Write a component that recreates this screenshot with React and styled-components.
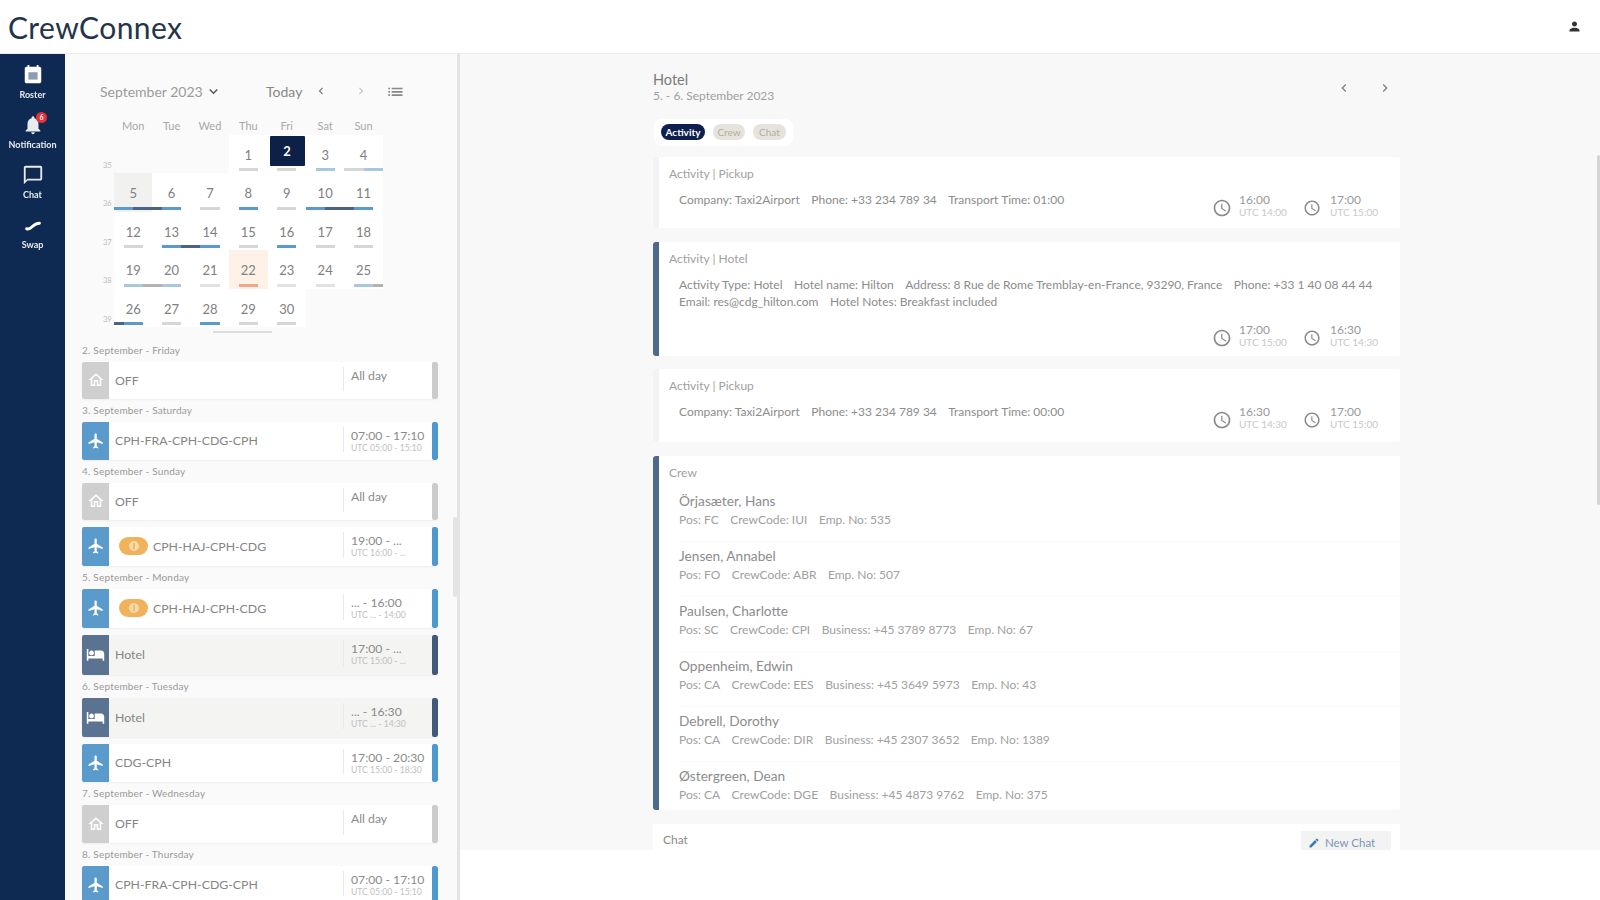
import React from 'react';
import styled, { createGlobalStyle } from 'styled-components';

const Global = createGlobalStyle`
  html, body { margin: 0; padding: 0; width: 1600px; height: 900px; overflow: hidden; background: #fff; }
  * { box-sizing: border-box; }
  body { font-family: Lato, "Open Sans", "Liberation Sans", sans-serif; color: #666; }
`;

const Shell = styled.div`
  width: 1600px; height: 900px; display: flex; flex-direction: column; position: relative; overflow: hidden;
  filter: blur(0.75px);
`;
const TopBar = styled.header`
  height: 54px; flex: none; display: flex; align-items: center; justify-content: space-between;
  padding: 0 18px 0 8px; background: #fff; border-bottom: 1px solid #ececec;
`;
const Logo = styled.div`font-size: 30px; color: #24344b; letter-spacing: 0.4px;`;
const Body = styled.div`flex: 1; display: flex; min-height: 0;`;
const Nav = styled.nav`width: 65px; flex: none; background: #0f2a52; display: flex; flex-direction: column;`;
const NavItem = styled.div`
  height: 50px; padding-top: 10px; display: flex; flex-direction: column; align-items: center; position: relative;
  color: #e8ebf0; font-size: 9px; font-weight: 700; line-height: 11px;
  svg { display: block; margin-bottom: 3px; }
`;
const NavBadge = styled.span`
  position: absolute; top: 8px; left: 36px; width: 11px; height: 11px; border-radius: 50%;
  background: #e5333a; color: #fff; font-size: 7px; line-height: 11px; text-align: center;
`;

const Panel = styled.aside`
  width: 395px; flex: none; background: #fafafa; border-right: 3px solid #e4e4e4; position: relative; overflow: hidden;
`;
const Toolbar = styled.div`
  height: 22px; margin: 26px 0 15px 35px; display: flex; align-items: center; color: #888; font-size: 14px;
`;
const Month = styled.span`display: flex; align-items: center; gap: 2px; width: 166px; color: #9a9a9a;`;
const TodayLabel = styled.span`width: 48px; color: #888;`;
const ToolIcon = styled.span`display: flex; width: ${p => p.$w}px;`;
const WeekHead = styled.div`
  margin-left: 31px; display: grid; grid-template-columns: 18px repeat(7, 38.4px); height: 18px; padding-top: 2px;
  font-size: 11px; color: #a8a8a8; text-align: center;
`;
const Grid = styled.div`
  margin-left: 31px; display: grid; grid-template-columns: 18px repeat(7, 38.4px); grid-auto-rows: 38.4px;
`;
const WeekNo = styled.div`font-size: 7.5px; color: #bbb; padding: 26px 0 0 7px; text-align: left;`;
const Cell = styled.div`
  display: flex; flex-direction: column; align-items: center; position: relative;
  background: ${p => p.$bg || (p.$empty ? 'transparent' : '#fff')};
  color: #808080; font-size: 13px; line-height: 16px; padding-top: 12px;
`;
const SelBox = styled.div`
  position: absolute; top: 1px; left: 2px; width: 35px; height: 30px; background: #0d2148; color: #fff;
  border-radius: 1px; text-align: center; line-height: 31px; font-weight: 700; font-size: 13px;
`;
const Bar = styled.div`position: absolute; left: 0; right: 0; bottom: 2px; height: 3px; display: flex;`;
const Seg = styled.span`flex: 1; background: ${p => p.$c || 'transparent'};`;
const Handle = styled.div`width: 59px; height: 2px; background: #ddd; margin: 4px 0 6px 148px;`;

const List = styled.div`margin-left: 17px; width: 356px;`;
const DayHead = styled.div`height: 23px; line-height: 23px; font-size: 10px; color: #999; letter-spacing: 0.2px;`;
const Rows = styled.div`display: flex; flex-direction: column; gap: 7px;`;
const Row = styled.div`
  height: ${p => p.$h}px; display: flex; background: ${p => p.$hotel ? '#f4f4f3' : '#fff'};
  border-radius: 2px; box-shadow: 0 1px 2px rgba(0,0,0,.05); overflow: hidden;
`;
const RowIcon = styled.div`
  width: 27px; flex: none; background: ${p => p.$c}; display: flex; align-items: center; justify-content: center; color: #fff;
`;
const RowText = styled.div`
  flex: 1; min-width: 0; padding-left: 6px; display: flex; align-items: center; gap: 5px; font-size: 12.3px; color: #858585;
`;
const Pill = styled.span`
  width: 29px; height: 18px; border-radius: 9px; background: #f1b25c; color: #fff; display: flex; align-items: center; justify-content: center; margin-left: 4px;
`;
const RowTime = styled.div`
  width: 89px; flex: none; position: relative; padding: 6px 0 0 8px; font-size: 12.2px; line-height: 15px; color: #8a8a8a; white-space: nowrap;
  &::before { content: ''; position: absolute; left: 0; top: 5px; bottom: 8px; width: 1px; background: #e9e9e9; }
`;
const RowUtc = styled.div`font-size: 8.6px; line-height: 9px; color: #c0c0c0; margin-top: 1px;`;
const RowEnd = styled.div`width: 6px; flex: none; background: ${p => p.$c}; border-radius: 2px;`;
const PanelThumb = styled.div`position: absolute; right: 0; top: 463px; width: 4px; height: 80px; background: #e4e4e4; border-radius: 2px;`;

const Main = styled.main`flex: 1; min-width: 0; display: flex; flex-direction: column; position: relative; background: #fff;`;
const Detail = styled.div`
  height: 796px; flex: none; background: #f8f8f8; overflow: hidden; padding: 18px 0 0 193px;
`;
const DetailInner = styled.div`width: 747px;`;
const DetailTop = styled.div`display: flex; justify-content: space-between; align-items: center; padding-right: 7px;`;
const Title = styled.div`font-size: 14.5px; line-height: 16px; color: #7a7a7a;`;
const Sub = styled.div`font-size: 12px; line-height: 16px; color: #a0a0a0;`;
const Arrows = styled.div`display: flex; gap: 25px; color: #808080;`;
const Tabs = styled.div`
  display: inline-flex; gap: 8px; margin: 15px 0 11px 1px; padding: 5px 7px 6px; background: #fff; border-radius: 8px;
`;
const Tab = styled.span`
  height: 16px; width: ${p => p.$w}px; text-align: center; border-radius: 8px; font-size: 10px; line-height: 16px;
  background: ${p => p.$active ? '#0d1f4f' : '#e6e3dc'}; color: ${p => p.$active ? '#fff' : '#b0ada4'}; font-weight: ${p => p.$active ? 700 : 400};
`;
const Card = styled.section`
  background: #fff; border-left: 6px solid ${p => p.$bar}; border-radius: 3px; margin-bottom: ${p => p.$mb}px;
  min-height: ${p => p.$h}px; padding: 10px 22px 0 10px;
`;
const CardTitle = styled.div`font-size: 12px; line-height: 14px; color: #a0a0a0;`;
const CardBody = styled.div`display: flex; flex-wrap: wrap; padding: 10px 0 0 10px;`;
const Info = styled.div`font-size: 12px; line-height: 17px; color: #8c8c8c; white-space: nowrap;`;
const InfoPart = styled.span`margin-right: 11.5px; &:last-child { margin-right: 0; }`;
const Times = styled.div`display: flex; gap: 15px; margin: ${p => p.$mt}px 0 0 auto;`;
const TimeBlock = styled.div`display: flex; gap: ${p => p.$gap}px; align-items: flex-end; width: ${p => p.$w}px; color: #8a8a8a;`;
const TimeText = styled.div`font-size: 12px; line-height: 12px; color: #9a9a9a;`;
const TimeUtc = styled.div`font-size: 10px; line-height: 12px; color: #c8c8c8; white-space: nowrap;`;
const CrewList = styled.div`padding: 7px 0 0 10px; margin-right: -22px;`;
const CrewEntry = styled.div`
  padding: 6px 0 14px; height: 55px; border-bottom: 1px solid #fbfbfb;
  &:last-child { border-bottom: 0; height: 48px; }
`;
const CrewName = styled.div`font-size: 13.7px; line-height: 16px; color: #8c8c8c;`;
const CrewInfo = styled.div`font-size: 12px; line-height: 16px; color: #a0a0a0; margin-top: 3px;`;
const ChatCard = styled.section`
  background: #fff; display: flex; justify-content: space-between; padding: 6px 9px 0 10px; height: 40px; margin-top: 1px;
`;
const ChatTitle = styled.div`font-size: 12px; line-height: 18px; color: #8a8a8a; padding-top: 1px;`;
const NewChat = styled.div`
  display: flex; align-items: center; gap: 5px; width: 90px; height: 26px; background: #f3f3f3; color: #7d96b8;
  font-size: 11.5px; padding: 0 7px 3px; margin-top: 1px;
`;
const MainThumb = styled.div`position: absolute; right: 0; top: 101px; width: 3px; height: 350px; background: #d4d4d4; border-radius: 2px;`;

const Ic = ({ d, size = 16, fill = 'currentColor' }) => (
  <svg width={size} height={size} viewBox="0 0 24 24" fill={fill}><path d={d} /></svg>
);
const P = {
  flight: 'M21 16v-2l-8-5V3.5c0-.83-.67-1.5-1.5-1.5S10 2.67 10 3.5V9l-8 5v2l8-2.5V19l-2 1.5V22l3.5-1 3.5 1v-1.5L13 19v-5.5l8 2.5z',
  hotel: 'M7 13c1.66 0 3-1.34 3-3S8.66 7 7 7s-3 1.34-3 3 1.34 3 3 3zm12-6h-8v7H3V5H1v15h2v-3h18v3h2v-9c0-2.21-1.79-4-4-4z',
  home: 'M12 5.69l5 4.5V18h-2v-6H9v6H7v-7.81l5-4.5M12 3L2 12h3v8h6v-6h2v6h6v-8h3L12 3z',
  clock: 'M11.99 2C6.47 2 2 6.48 2 12s4.47 10 9.99 10C17.52 22 22 17.52 22 12S17.52 2 11.99 2zM12 20c-4.42 0-8-3.58-8-8s3.58-8 8-8 8 3.58 8 8-3.58 8-8 8zm.5-13H11v6l5.25 3.15.75-1.23-4.5-2.67z',
  person: 'M12 12c2.21 0 4-1.79 4-4s-1.79-4-4-4-4 1.79-4 4 1.79 4 4 4zm0 2c-2.67 0-8 1.34-8 4v2h16v-2c0-2.66-5.33-4-8-4z',
  list: 'M4 14h2v-2H4v2zm0 4h2v-2H4v2zm0-8h2V8H4v2zm4 4h13v-2H8v2zm0 4h13v-2H8v2zM8 8v2h13V8H8z',
  left: 'M15.41 7.41L14 6l-6 6 6 6 1.41-1.41L10.83 12z',
  right: 'M10 6L8.59 7.41 13.17 12l-4.58 4.58L10 18l6-6z',
  down: 'M7.41 8.59L12 13.17l4.59-4.58L18 10l-6 6-6-6z',
  pen: 'M3 17.25V21h3.75L17.81 9.94l-3.75-3.75L3 17.25zM20.71 7.04c.39-.39.39-1.02 0-1.41l-2.34-2.34c-.39-.39-1.02-.39-1.41 0l-1.83 1.83 3.75 3.75 1.83-1.83z',
  bell: 'M12 22c1.1 0 2-.9 2-2h-4c0 1.1.89 2 2 2zm6-6v-5c0-3.07-1.64-5.64-4.5-6.32V4c0-.83-.67-1.5-1.5-1.5s-1.5.67-1.5 1.5v.68C7.63 5.36 6 7.92 6 11v5l-2 2v1h16v-1l-2-2z',
  chat: 'M20 2H4c-1.1 0-2 .9-2 2v18l4-4h14c1.1 0 2-.9 2-2V4c0-1.1-.9-2-2-2zm0 14H6l-2 2V4h16v12z',
  cal: 'M19 3h-1V1h-2v2H8V1H6v2H5c-1.1 0-2 .9-2 2v14c0 1.1.9 2 2 2h14c1.1 0 2-.9 2-2V5c0-1.1-.9-2-2-2z',
};

const g = '#d6d6d6', b = '#5b9bcc', d = '#4c6482', lb = '#a9c8e0', lg = '#b3b3b3', vl = '#e2e2e2', o = '#f4a68a';
const G = [null, g, g, null], B = [null, b, b, null], VL = [null, vl, vl, null];
const weeks = [
  { no: 35, days: [null, null, null, { n: 1, bar: G }, { n: 2, sel: true, bar: G }, { n: 3, bar: [null, lb, lb, null] }, { n: 4, bar: [g, g, lb, lb] }] },
  { no: 36, days: [{ n: 5, bg: '#f1f1f0', bar: [b, b, d, d] }, { n: 6, bar: [d, b, b, null] }, { n: 7, bar: G }, { n: 8, bar: B }, { n: 9, bar: G }, { n: 10, bar: [b, b, d, d] }, { n: 11, bar: [d, b, b, null] }] },
  { no: 37, days: [{ n: 12, bar: G }, { n: 13, bar: [null, b, b, d] }, { n: 14, bar: [d, b, b, null] }, { n: 15, bar: G }, { n: 16, bar: B }, { n: 17, bar: G }, { n: 18, bar: G }] },
  { no: 38, days: [{ n: 19, bar: [null, lb, lb, lg] }, { n: 20, bar: [lg, lb, lb, null] }, { n: 21, bar: VL }, { n: 22, bg: '#fdf1e8', bar: [null, o, o, null] }, { n: 23, bar: VL }, { n: 24, bar: VL }, { n: 25, bar: [null, lb, lb, lg] }] },
  { no: 39, days: [{ n: 26, bar: [d, b, b, null] }, { n: 27, bar: G }, { n: 28, bar: B }, { n: 29, bar: G }, { n: 30, bar: G }, null, null] },
];

const off = { kind: 'off', text: 'OFF', time: 'All day' };
const route = { kind: 'flight', text: 'CPH-FRA-CPH-CDG-CPH', time: '07:00 - 17:10', utc: 'UTC 05:00 - 15:10' };
const days = [
  ['2. September - Friday', [off]],
  ['3. September - Saturday', [route]],
  ['4. September - Sunday', [off, { kind: 'flight', pill: true, h: 39, text: 'CPH-HAJ-CPH-CDG', time: '19:00 - ...', utc: 'UTC 16:00 - ...' }]],
  ['5. September - Monday', [{ kind: 'flight', pill: true, h: 39, text: 'CPH-HAJ-CPH-CDG', time: '... - 16:00', utc: 'UTC ... - 14:00' }, { kind: 'hotel', h: 40, text: 'Hotel', time: '17:00 - ...', utc: 'UTC 15:00 - ...' }]],
  ['6. September - Tuesday', [{ kind: 'hotel', text: 'Hotel', time: '... - 16:30', utc: 'UTC ... - 14:30' }, { kind: 'flight', text: 'CDG-CPH', time: '17:00 - 20:30', utc: 'UTC 15:00 - 18:30' }]],
  ['7. September - Wednesday', [{ ...off, h: 38 }]],
  ['8. September - Thursday', [route]],
];
const kinds = {
  off: { c: '#cfcfcf', end: '#cbcbcb', h: 37, icon: P.home },
  flight: { c: '#5b9bcc', end: '#4f97cf', h: 38, icon: P.flight },
  hotel: { c: '#5a7391', end: '#41597a', h: 39, icon: P.hotel },
};

const crew = [
  ['Örjasæter, Hans', ['Pos: FC', 'CrewCode: IUI', 'Emp. No: 535']],
  ['Jensen, Annabel', ['Pos: FO', 'CrewCode: ABR', 'Emp. No: 507']],
  ['Paulsen, Charlotte', ['Pos: SC', 'CrewCode: CPI', 'Business: +45 3789 8773', 'Emp. No: 67']],
  ['Oppenheim, Edwin', ['Pos: CA', 'CrewCode: EES', 'Business: +45 3649 5973', 'Emp. No: 43']],
  ['Debrell, Dorothy', ['Pos: CA', 'CrewCode: DIR', 'Business: +45 2307 3652', 'Emp. No: 1389']],
  ['Østergreen, Dean', ['Pos: CA', 'CrewCode: DGE', 'Business: +45 4873 9762', 'Emp. No: 375']],
];

const TimePair = ({ a, au, c, cu, mt = 3 }) => (
  <Times $mt={mt}>
    <TimeBlock $w={76} $gap={7}><Ic d={P.clock} size={20} /><div><TimeText>{a}</TimeText><TimeUtc>{au}</TimeUtc></div></TimeBlock>
    <TimeBlock $w={75} $gap={9}><Ic d={P.clock} size={20} /><div><TimeText>{c}</TimeText><TimeUtc>{cu}</TimeUtc></div></TimeBlock>
  </Times>
);
const Parts = ({ items }) => items.map(t => <InfoPart key={t}>{t}</InfoPart>);
const pickup = t => ['Company: Taxi2Airport', 'Phone: +33 234 789 34', `Transport Time: ${t}`];

export default function App() {
  return (
    <Shell>
      <Global />
      <TopBar>
        <Logo>CrewConnex</Logo>
        <Ic d={P.person} size={15} fill="#333" />
      </TopBar>
      <Body>
        <Nav>
          <NavItem>
            <svg width="22" height="22" viewBox="0 0 24 24"><path fill="#fff" d={P.cal} /><rect x="7" y="9" width="10" height="8" fill="#8f9bb0" /></svg>
            Roster
          </NavItem>
          <NavItem><Ic d={P.bell} size={22} /><NavBadge>6</NavBadge>Notification</NavItem>
          <NavItem><Ic d={P.chat} size={22} />Chat</NavItem>
          <NavItem>
            <svg width="22" height="22" viewBox="0 0 24 24" fill="none" stroke="#fff" strokeWidth="3.2" strokeLinecap="round"><path d="M5 16c2 1 4 0 6-2s4-4 8-4" /></svg>
            Swap
          </NavItem>
        </Nav>
        <Panel>
          <Toolbar>
            <Month>September 2023 <Ic d={P.down} size={17} fill="#555" /></Month>
            <TodayLabel>Today</TodayLabel>
            <ToolIcon $w={40}><Ic d={P.left} size={14} fill="#777" /></ToolIcon>
            <ToolIcon $w={31}><Ic d={P.right} size={14} fill="#c4c4c4" /></ToolIcon>
            <ToolIcon $w={20}><Ic d={P.list} size={20} fill="#888" /></ToolIcon>
          </Toolbar>
          <WeekHead>
            <span />
            {['Mon', 'Tue', 'Wed', 'Thu', 'Fri', 'Sat', 'Sun'].map(x => <span key={x}>{x}</span>)}
          </WeekHead>
          <Grid>
            {weeks.map(w => (
              <React.Fragment key={w.no}>
                <WeekNo>{w.no}</WeekNo>
                {w.days.map((c, i) => c ? (
                  <Cell key={i} $bg={c.bg}>
                    {c.sel ? <SelBox>{c.n}</SelBox> : c.n}
                    <Bar>{c.bar.map((s, j) => <Seg key={j} $c={s} />)}</Bar>
                  </Cell>
                ) : <Cell key={i} $empty />)}
              </React.Fragment>
            ))}
          </Grid>
          <Handle />
          <List>
            {days.map(([head, rows]) => (
              <div key={head}>
                <DayHead>{head}</DayHead>
                <Rows>
                  {rows.map((r, i) => {
                    const k = kinds[r.kind];
                    return (
                      <Row key={i} $h={r.h || k.h} $hotel={r.kind === 'hotel'}>
                        <RowIcon $c={k.c}><Ic d={k.icon} size={r.kind === 'hotel' ? 19 : 18} /></RowIcon>
                        <RowText>
                          {r.pill && <Pill><svg width="12" height="12" viewBox="0 0 12 12"><circle cx="6" cy="6" r="5" fill="#f7d9a8" /><rect x="5.2" y="3" width="1.6" height="6" fill="#f1b25c" /></svg></Pill>}
                          {r.text}
                        </RowText>
                        <RowTime>{r.time}{r.utc && <RowUtc>{r.utc}</RowUtc>}</RowTime>
                        <RowEnd $c={k.end} />
                      </Row>
                    );
                  })}
                </Rows>
              </div>
            ))}
          </List>
          <PanelThumb />
        </Panel>
        <Main>
          <Detail>
            <DetailInner>
              <DetailTop>
                <div>
                  <Title>Hotel</Title>
                  <Sub>5. - 6. September 2023</Sub>
                </div>
                <Arrows><Ic d={P.left} /><Ic d={P.right} /></Arrows>
              </DetailTop>
              <Tabs>
                <Tab $active $w={44}>Activity</Tab>
                <Tab $w={32}>Crew</Tab>
                <Tab $w={33}>Chat</Tab>
              </Tabs>
              <Card $bar="#f3f3f3" $h={71} $mb={14}>
                <CardTitle>Activity | Pickup</CardTitle>
                <CardBody>
                  <Info><Parts items={pickup('01:00')} /></Info>
                  <TimePair a="16:00" au="UTC 14:00" c="17:00" cu="UTC 15:00" />
                </CardBody>
              </Card>
              <Card $bar="#4d6a8a" $h={114} $mb={13}>
                <CardTitle>Activity | Hotel</CardTitle>
                <CardBody>
                  <Info>
                    <Parts items={['Activity Type: Hotel', 'Hotel name: Hilton', 'Address: 8 Rue de Rome Tremblay-en-France, 93290, France', 'Phone: +33 1 40 08 44 44']} />
                    <br />
                    <Parts items={['Email: res@cdg_hilton.com', 'Hotel Notes: Breakfast included']} />
                  </Info>
                  <TimePair mt={14} a="17:00" au="UTC 15:00" c="16:30" cu="UTC 14:30" />
                </CardBody>
              </Card>
              <Card $bar="#f3f3f3" $h={73} $mb={14}>
                <CardTitle>Activity | Pickup</CardTitle>
                <CardBody>
                  <Info><Parts items={pickup('00:00')} /></Info>
                  <TimePair a="16:30" au="UTC 14:30" c="17:00" cu="UTC 15:00" />
                </CardBody>
              </Card>
              <Card $bar="#4d6a8a" $h={353} $mb={14}>
                <CardTitle>Crew</CardTitle>
                <CrewList>
                  {crew.map(([n, info]) => (
                    <CrewEntry key={n}>
                      <CrewName>{n}</CrewName>
                      <CrewInfo><Parts items={info} /></CrewInfo>
                    </CrewEntry>
                  ))}
                </CrewList>
              </Card>
              <ChatCard>
                <ChatTitle>Chat</ChatTitle>
                <NewChat><Ic d={P.pen} size={12} fill="#3f78b8" />New Chat</NewChat>
              </ChatCard>
            </DetailInner>
          </Detail>
          <MainThumb />
        </Main>
      </Body>
    </Shell>
  );
}
